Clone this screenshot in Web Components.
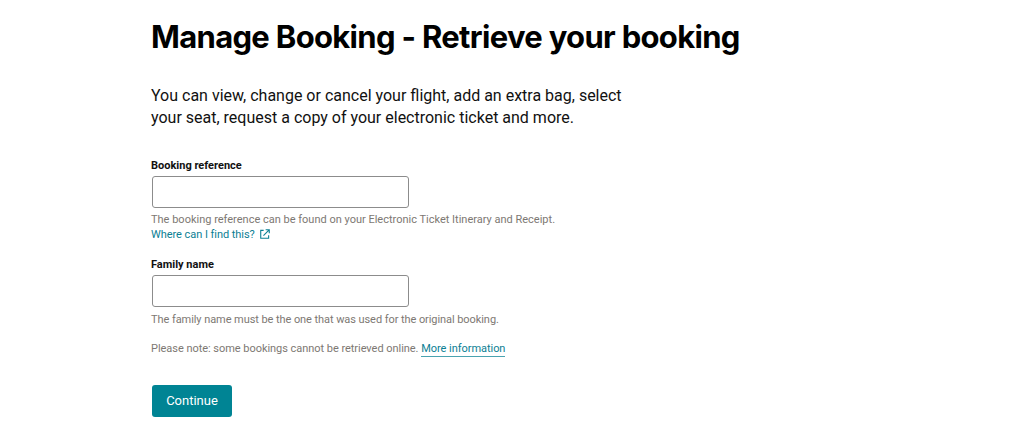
<!DOCTYPE html>
<html lang="en">
<head>
<meta charset="utf-8">
<title>Manage Booking</title>
<style>
  html, body { margin: 0; background: #fff; }
  body { font-family: Roboto, "Liberation Sans", sans-serif; color: #000; overflow: hidden; }
</style>
</head>
<body>
<booking-page>
  <span slot="title">Manage Booking - Retrieve your booking</span>
  <span slot="intro">You can view, change or cancel your flight, add an extra bag, select your seat, request a copy of your electronic ticket and more.</span>
  <form-field label="Booking reference">
    The booking reference can be found on your Electronic Ticket Itinerary and Receipt.<br>
    <ext-link>Where can I find this?</ext-link>
  </form-field>
  <form-field label="Family name" style="margin-top:14px; --hint-gap:5px; --hint-spacing:-0.07px">
    The family name must be the one that was used for the original booking.
  </form-field>
  <note-line>Please note: some bookings cannot be retrieved online. <a href="#" slot="link">More information</a></note-line>
  <primary-button>Continue</primary-button>
</booking-page>

<script>
  class BookingPage extends HTMLElement {
    constructor() {
      super();
      this.attachShadow({ mode: "open" });
      this.shadowRoot.innerHTML = `
        <style>
          :host { display: block; padding: 15px 0 0 151px; }
          h1 { margin: 0; font: 650 31px/44px "Inter", sans-serif; letter-spacing: -0.68px; color: #000; }
          p { margin: 26px 0 28px; width: 490px; font-size: 16px; line-height: 22px; color: #111; }
        </style>
        <h1><slot name="title"></slot></h1>
        <p><slot name="intro"></slot></p>
        <slot></slot>
      `;
    }
  }

  class FormField extends HTMLElement {
    constructor() {
      super();
      this.attachShadow({ mode: "open" });
      this.shadowRoot.innerHTML = `
        <style>
          :host { display: block; }
          label { display: block; padding-top: 1px; margin-bottom: 2px; font-size: 11px; line-height: 16px; font-weight: 700; color: #111; }
          input { display: block; box-sizing: border-box; width: 257px; height: 32px; margin: 0 0 0 1px; padding: 0 8px;
                  border: 1px solid #8c8c8c; border-radius: 3px; background: #fff; }
          .hint { margin-top: var(--hint-gap, 4px); font-size: 11px; line-height: 15px; color: #7d7873; letter-spacing: var(--hint-spacing, 0); }
        </style>
        <label></label>
        <input type="text">
        <div class="hint"><slot></slot></div>
      `;
    }
    connectedCallback() {
      this.shadowRoot.querySelector("label").textContent = this.getAttribute("label");
    }
  }

  class ExtLink extends HTMLElement {
    constructor() {
      super();
      this.attachShadow({ mode: "open" });
      this.shadowRoot.innerHTML = `
        <style>
          :host { display: inline-flex; align-items: center; gap: 5px; color: #0b8094; letter-spacing: -0.05px; }
          svg { width: 10px; height: 10px; display: block; margin-top: -1px; }
        </style>
        <slot></slot>
        <svg viewBox="0 0 11 11" fill="none" stroke="#0b8094" stroke-width="1.2">
          <path d="M4 1.5H.8v8.7h8.7V7"/>
          <path d="M3.8 7.2 10 1M6.2.8h4v4"/>
        </svg>
      `;
    }
  }

  class NoteLine extends HTMLElement {
    constructor() {
      super();
      this.attachShadow({ mode: "open" });
      this.shadowRoot.innerHTML = `
        <style>
          :host { display: block; margin-top: 14px; font-size: 11px; line-height: 15px; color: #7d7873; letter-spacing: -0.04px; }
          ::slotted(a) { color: #0b8094; text-decoration: none; border-bottom: 1px solid #4aa3b0; padding-bottom: 1px; }
        </style>
        <slot></slot><slot name="link"></slot>
      `;
    }
  }

  class PrimaryButton extends HTMLElement {
    constructor() {
      super();
      this.attachShadow({ mode: "open" });
      this.shadowRoot.innerHTML = `
        <style>
          :host { display: block; margin-top: 29px; padding-left: 1px; }
          button { display: block; box-sizing: border-box; width: 80px; height: 32px; padding: 0 0 2px; border: 0; border-radius: 3px;
                   background: #008494; color: #fff; font: 400 13px Roboto, "Liberation Sans", sans-serif; }
        </style>
        <button type="button"><slot></slot></button>
      `;
    }
  }

  customElements.define("booking-page", BookingPage);
  customElements.define("form-field", FormField);
  customElements.define("ext-link", ExtLink);
  customElements.define("note-line", NoteLine);
  customElements.define("primary-button", PrimaryButton);
</script>
</body>
</html>
